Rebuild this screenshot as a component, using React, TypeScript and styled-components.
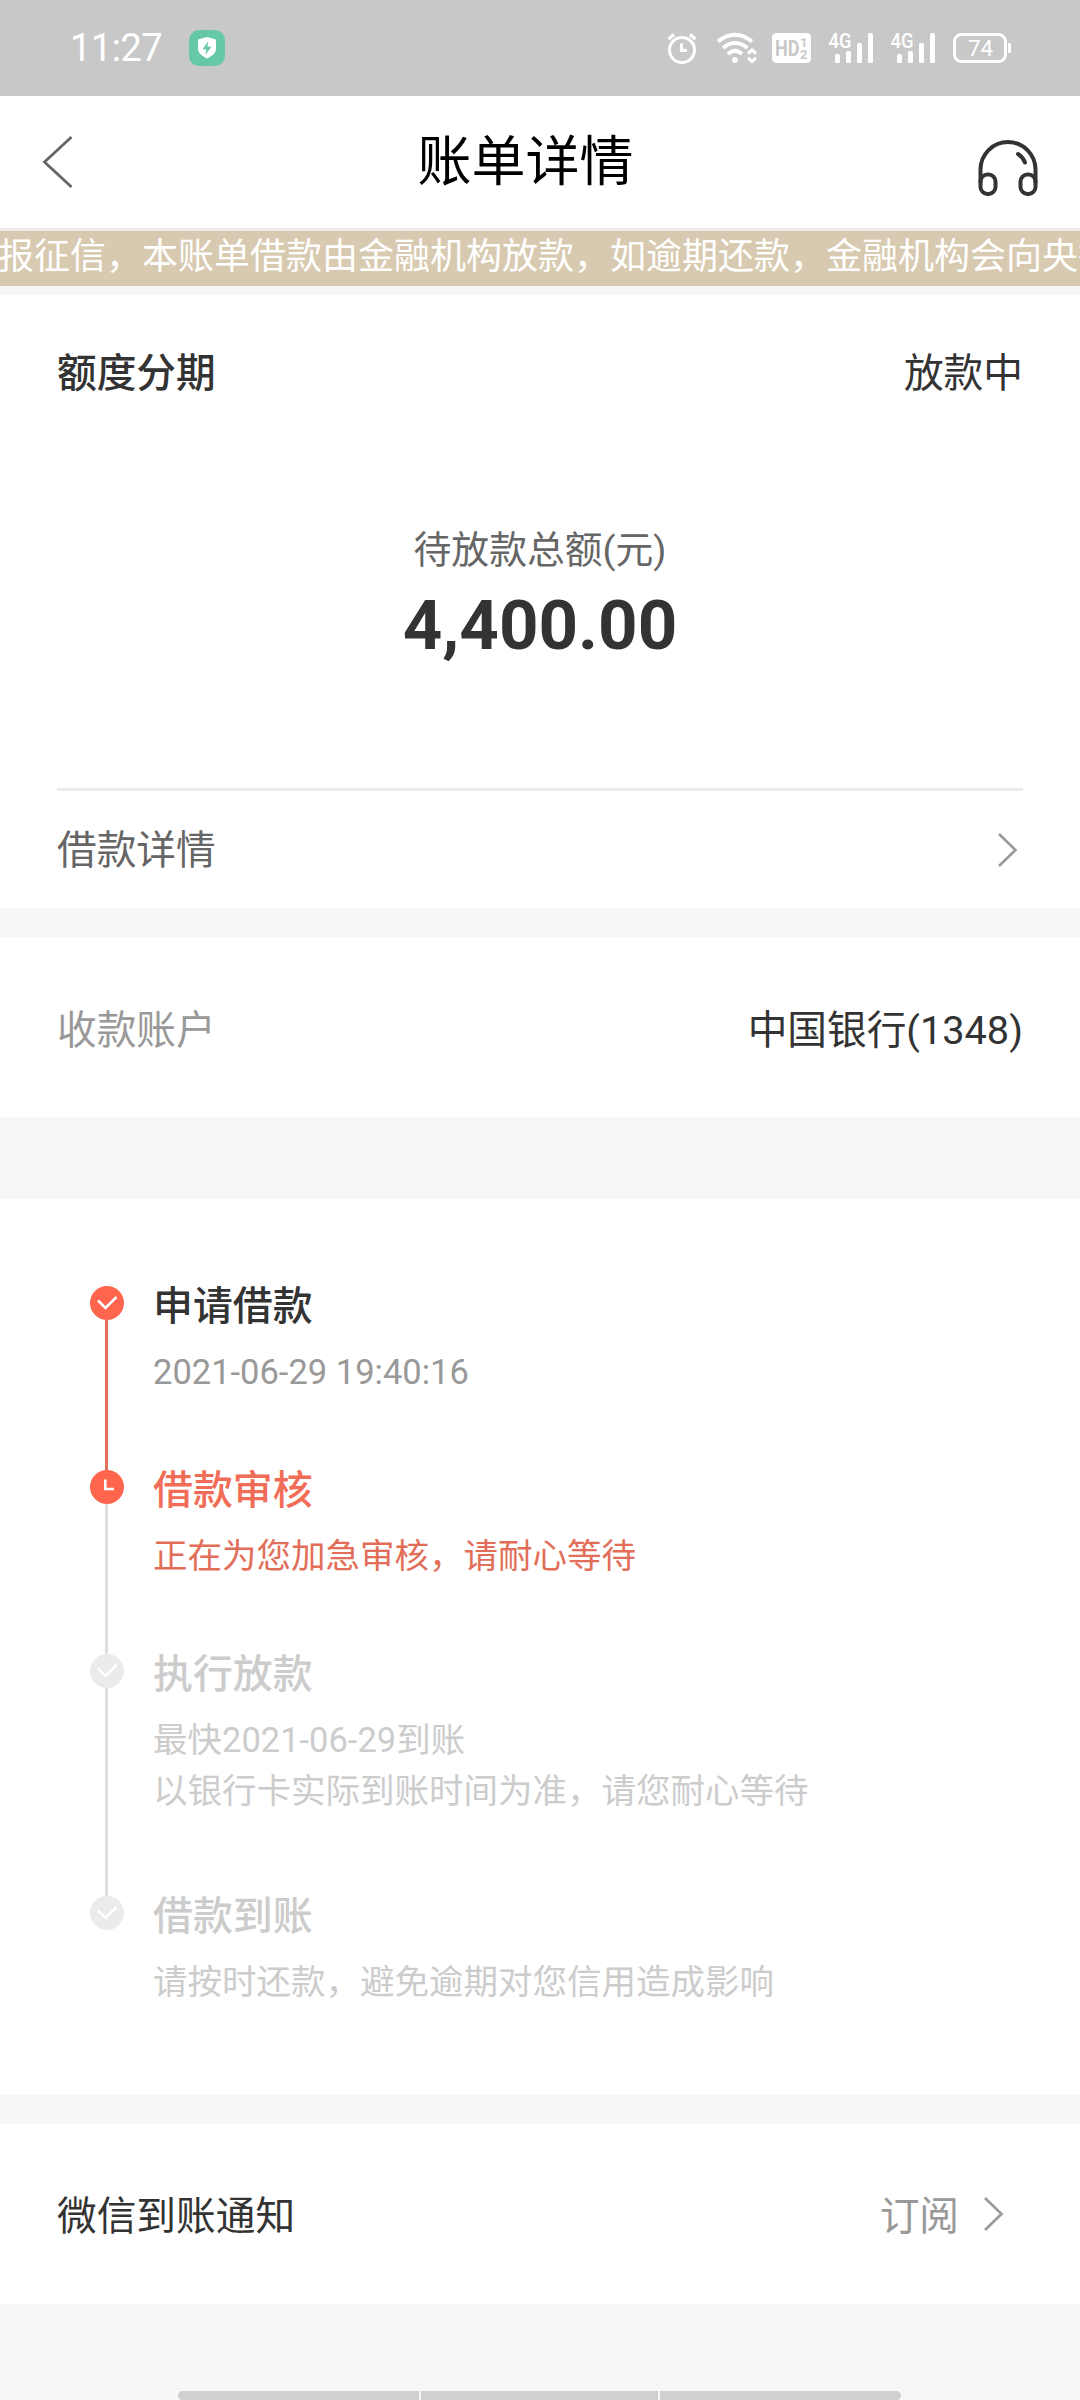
import React from "react";
import styled, { createGlobalStyle } from "styled-components";

const SANS = `Roboto, "Noto Sans CJK SC", sans-serif`;

const GlobalStyle = createGlobalStyle`
  * { box-sizing: border-box; }
  body { margin: 0; background: #f6f7f9; font-family: ${SANS}; }
`;

const Page = styled.div`
  width: 1080px;
  height: 2400px;
  display: flex;
  flex-direction: column;
  background: #f6f7f9;
  color: #333;
  overflow: hidden;
  white-space: nowrap;
  svg { display: block; flex: none; }
`;

const StatusBar = styled.header`
  flex: none;
  height: 96px;
  padding: 0 69px 0 70px;
  display: flex;
  justify-content: space-between;
  align-items: center;
  background: #c8c8c8;
  color: #fff;
`;

const StatusLeft = styled.div`
  display: flex;
  align-items: center;
`;

const Clock = styled.span`
  width: 119px;
  font-size: 38px;
  line-height: 44px;
  letter-spacing: -0.5px;
`;

const StatusIcons = styled.div`
  display: flex;
  align-items: center;
`;

const NavBar = styled.nav`
  flex: none;
  height: 135px;
  display: grid;
  grid-template-columns: 120px 1fr 120px;
  align-items: center;
  background: #fff;
  border-bottom: 3px solid #ebebeb;
`;

const NavTitle = styled.h1`
  margin: 0;
  padding: 2px 29px 0 0;
  font-size: 54px;
  line-height: 64px;
  font-weight: 400;
  text-align: center;
  color: #000;
`;

const BackButton = styled.div`
  padding-left: 42px;
`;

const SupportButton = styled.div`
  padding: 14px 0 0 16px;
`;

const Notice = styled.div`
  flex: none;
  height: 55px;
  margin-bottom: 9px;
  overflow: hidden;
  background: #d8cab0;
  color: #fff;
  font-size: 36px;
  line-height: 53px;
  text-indent: -2px;
`;

const Card = styled.section<{ $gap: number }>`
  flex: none;
  background: #fff;
  padding: 0 57px;
  margin-bottom: ${(p) => p.$gap}px;
`;

const Row = styled.div<{ $height: number }>`
  height: ${(p) => p.$height}px;
  display: flex;
  align-items: center;
  justify-content: space-between;
  font-size: 39.7px;
  line-height: 48px;
`;

const Label = styled.span<{ $color?: string; $bold?: boolean; $drop?: number }>`
  padding-top: ${(p) => (p.$drop || 0) * 2}px;
  color: ${(p) => p.$color || "#333"};
  font-weight: ${(p) => (p.$bold ? 500 : 400)};
`;

const Amount = styled.div`
  height: 342px;
  padding-top: 77px;
  display: flex;
  flex-direction: column;
  align-items: center;
  border-bottom: 3px solid #ebebeb;
`;

const AmountLabel = styled.div`
  font-size: 37.8px;
  line-height: 48px;
  color: #666;
`;

const AmountValue = styled.div`
  margin-top: 12px;
  font-size: 69px;
  line-height: 80px;
  font-weight: 700;
`;

const Link = styled.div<{ $inset: number }>`
  display: flex;
  align-items: center;
  gap: 24px;
  padding-right: ${(p) => p.$inset}px;
`;

const Timeline = styled.ol`
  list-style: none;
  margin: 0;
  height: 896px;
  padding: 87px 0 0 33px;
`;

const Step = styled.li<{ $height: number }>`
  height: ${(p) => p.$height}px;
  display: flex;
  gap: 29px;
`;

const Rail = styled.div<{ $line: string }>`
  width: 34px;
  display: flex;
  flex-direction: column;
  align-items: center;
  &::after {
    content: "";
    flex: 1;
    width: 3px;
    margin-right: 1px;
    background: ${(p) => p.$line};
  }
`;

const StepTitle = styled.div<{ $color: string }>`
  font-size: 39.9px;
  line-height: 48px;
  margin: -3px 0 16px;
  font-weight: 500;
  color: ${(p) => p.$color};
`;

const StepText = styled.div<{ $color: string }>`
  font-size: 34.5px;
  line-height: 51px;
  color: ${(p) => p.$color};
`;

const HomeBar = styled.div`
  flex: none;
  margin: 87px 0 0 178px;
  width: 723px;
  height: 9px;
  display: grid;
  grid-template-columns: 241px 237px 1fr;
  gap: 2px;
  border-radius: 5px;
  overflow: hidden;
  div { background: #d0d0d0; }
`;

const Chevron = () => (
  <svg width="22" height="36" viewBox="0 0 22 36" fill="none" stroke="#999" strokeWidth="2.6">
    <path d="M2 2L18.5 18L2 34" />
  </svg>
);

const StepIcon = ({ kind, fill }: { kind: "check" | "clock"; fill: string }) => (
  <svg width="34" height="34" viewBox="0 0 34 34" fill="none" stroke="#fff" strokeWidth="2.6">
    <circle cx="17" cy="17" r="17" fill={fill} stroke="none" />
    {kind === "check" ? <path d="M8 14.5L15.5 22L26.5 11" /> : <path d="M15.3 9.5V19H24" />}
  </svg>
);

const Shield = () => (
  <svg width="36" height="36" viewBox="0 0 36 36">
    <rect width="36" height="36" rx="10" fill="#65c9a8" />
    <path d="M18 7L26.200 9.300Q27 9.600 27 10.500V19C27 23.500 22 26.500 18 28.500C14 26.500 9 23.500 9 19V10.500Q9 9.600 9.800 9.300Z" fill="#fff" />
    <path d="M19 11.500L13.500 19.300H17.300L16.500 24.500L22.500 16.800H18.500Z" fill="#65c9a8" />
  </svg>
);

const StatusGlyphs = () => (
  <svg width="346" height="40" viewBox="665 28 346 40" fill="none" stroke="#fff">
    <circle cx="682" cy="50" r="12.500" strokeWidth="3" />
    <path d="M668.500 39L674 34.500M695.500 39L690 34.500" strokeWidth="3.500" />
    <path d="M681.500 43.500V50.500H687" strokeWidth="3" />
    <path d="M718 41.500Q735 28 752 41.500" strokeWidth="4" />
    <path d="M723 48Q735 38 747.500 48" strokeWidth="4" />
    <path d="M728 54Q735 47.500 742 54" strokeWidth="4" />
    <circle cx="735" cy="60" r="3" fill="#fff" stroke="none" />
    <path d="M748 53.500L752 50L756 53.500M748 58L752 61.500L756 58" strokeWidth="3" />
    <rect x="772" y="33" width="39" height="30" rx="4.500" fill="#fff" stroke="none" />
    <g fill="#c8c8c8" stroke="none" fontFamily="Roboto" fontWeight="700">
      <text x="775" y="56" fontSize="22" textLength="24.500" lengthAdjust="spacingAndGlyphs">HD</text>
      <text x="800" y="47" fontSize="13">1</text>
      <text x="800" y="58.500" fontSize="13">2</text>
    </g>
    <g fill="#fff" stroke="none" fontFamily="Roboto">
      {[0, 62].map((dx) => (
        <g key={dx} transform={`translate(${dx} 0)`}>
          <text x="828.500" y="47.500" fontSize="20" fontWeight="500" textLength="23" lengthAdjust="spacingAndGlyphs">4G</text>
          <rect x="835" y="54" width="5" height="9" rx="1.500" />
          <rect x="846" y="51" width="5" height="12" rx="1.500" />
          <rect x="857" y="43" width="5" height="20" rx="1.500" />
          <rect x="868" y="33" width="5" height="30" rx="1.500" />
        </g>
      ))}
      <text x="968" y="55.500" fontSize="21.500" textLength="25" lengthAdjust="spacingAndGlyphs">74</text>
      <path d="M1008 43h1.500q1.500 0 1.500 1.500v7q0 1.500 -1.500 1.500h-1.500z" />
    </g>
    <rect x="954.500" y="34.500" width="51" height="27" rx="7" strokeWidth="3" />
  </svg>
);

const Headset = () => (
  <svg width="64" height="60" viewBox="0 0 64 60" fill="none" stroke="#333" strokeWidth="4">
    <path d="M4.500 44V30.500A27.500 27.500 0 0 1 59.500 30.500V44" />
    <rect x="4.500" y="35.500" width="15" height="19.500" rx="7" />
    <rect x="44.500" y="35.500" width="15" height="19.500" rx="7" />
    <path d="M42 15Q47 18 49 23.500" strokeLinecap="round" />
  </svg>
);

const steps = [
  { title: "申请借款", lines: ["2021-06-29 19:40:16"], icon: "check", fill: "#ff644d", title_c: "#333", text: "#999", line: "#e26e59", h: 184 },
  { title: "借款审核", lines: ["正在为您加急审核，请耐心等待"], icon: "clock", fill: "#ff644d", title_c: "#f26d57", text: "#e26e59", line: "#dfdfdf", h: 184 },
  { title: "执行放款", lines: ["最快2021-06-29到账", "以银行卡实际到账时间为准，请您耐心等待"], icon: "check", fill: "#ebebeb", title_c: "#ccc", text: "#ccc", line: "#dfdfdf", h: 242 },
  { title: "借款到账", lines: ["请按时还款，避免逾期对您信用造成影响"], icon: "check", fill: "#ebebeb", title_c: "#ccc", text: "#ccc", line: "transparent", h: 150 },
] as const;

export default function App() {
  return (
    <Page>
      <GlobalStyle />
      <StatusBar>
        <StatusLeft>
          <Clock>11:27</Clock>
          <Shield />
        </StatusLeft>
        <StatusIcons>
          <StatusGlyphs />
        </StatusIcons>
      </StatusBar>
      <NavBar>
        <BackButton>
          <svg width="32" height="54" viewBox="0 0 32 54" fill="none" stroke="#666" strokeWidth="2.800">
            <path d="M29.500 2L2.500 27L29.500 52" />
          </svg>
        </BackButton>
        <NavTitle>账单详情</NavTitle>
        <SupportButton>
          <Headset />
        </SupportButton>
      </NavBar>
      <Notice>报征信，本账单借款由金融机构放款，如逾期还款，金融机构会向央行</Notice>
      <Card $gap={29}>
        <Row $height={154}>
          <Label $bold $drop={2}>额度分期</Label>
          <Label $drop={2}>放款中</Label>
        </Row>
        <Amount>
          <AmountLabel>待放款总额(元)</AmountLabel>
          <AmountValue>4,400.00</AmountValue>
        </Amount>
        <Row $height={117}>
          <Label $color="#666" $drop={1}>借款详情</Label>
          <Link $inset={4}>
            <Chevron />
          </Link>
        </Row>
      </Card>
      <Card $gap={82}>
        <Row $height={180}>
          <Label $color="#999" $drop={4}>收款账户</Label>
          <Label $drop={4}>中国银行(1348)</Label>
        </Row>
      </Card>
      <Card $gap={29}>
        <Timeline>
          {steps.map((s) => (
            <Step key={s.title} $height={s.h}>
              <Rail $line={s.line}>
                <StepIcon kind={s.icon} fill={s.fill} />
              </Rail>
              <div>
                <StepTitle $color={s.title_c}>{s.title}</StepTitle>
                {s.lines.map((l) => (
                  <StepText key={l} $color={s.text}>{l}</StepText>
                ))}
              </div>
            </Step>
          ))}
        </Timeline>
      </Card>
      <Card $gap={0}>
        <Row $height={180}>
          <Label $drop={3}>微信到账通知</Label>
          <Link $inset={18}>
            <Label $color="#999" $drop={3}>订阅</Label>
            <Chevron />
          </Link>
        </Row>
      </Card>
      <HomeBar>
        <div />
        <div />
        <div />
      </HomeBar>
    </Page>
  );
}
